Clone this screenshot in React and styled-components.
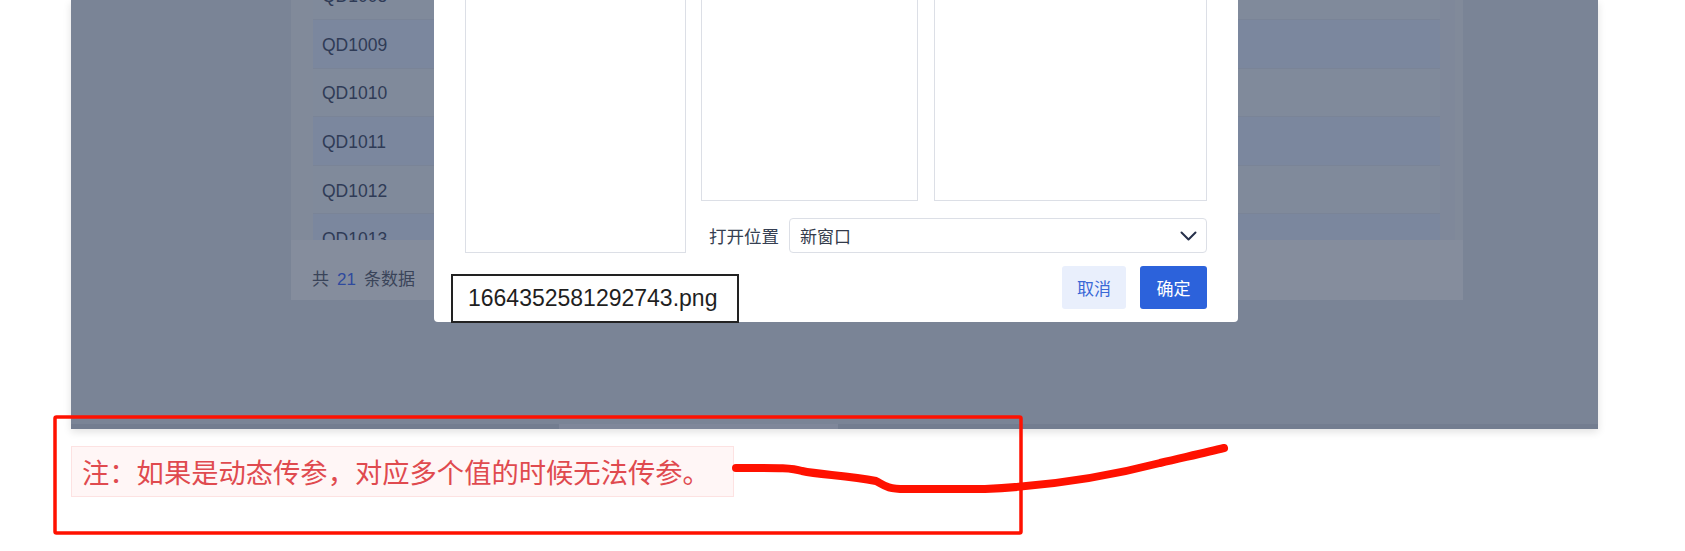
import React from "react";
import styled, { createGlobalStyle } from "styled-components";

const GlobalStyle = createGlobalStyle`
  html, body {
    margin: 0;
    background: #ffffff;
  }
  body {
    font-family: "Liberation Sans", "Noto Sans CJK SC", sans-serif;
  }
`;

const Page = styled.div`
  position: relative;
  width: 1685px;
  height: 551px;
  overflow: hidden;
  background: #ffffff;
`;

const Frame = styled.div`
  position: relative;
  margin-left: 71px;
  width: 1527px;
  height: 429px;
  background: #7a8496;
  box-shadow: 0 3px 8px rgba(0, 0, 0, 0.12);
  display: flex;
  flex-direction: column;
`;

const TableArea = styled.div`
  flex: 1;
  padding-left: 220px;
`;

const TablePanel = styled.div`
  width: 1172px;
  height: 300px;
  background: #818a9a;
  display: flex;
  flex-direction: column;
`;

const RowsArea = styled.div`
  height: 240px;
  display: flex;
  padding-left: 22px;
  padding-right: 8px;
`;

const RowsViewport = styled.div`
  width: 1127px;
  height: 240px;
  overflow: hidden;
`;

const RowsList = styled.div`
  margin-top: -28.5px;
`;

const Row = styled.div`
  height: 48.6px;
  box-sizing: border-box;
  display: flex;
  align-items: center;
  padding: 3px 0 0 9px;
  background: ${(p) => (p.$alt ? "#7b879e" : "#808a9b")};
  border-bottom: 1px solid #7a8497;
  color: #2f3b56;
  font-size: 17.5px;
`;

const ScrollTrack = styled.div`
  width: 15px;
  background: #7f889a;
`;

const PanelFooter = styled.div`
  flex: 1;
  background: #858d9d;
  padding: 28px 0 0 21px;
  line-height: 24px;
  font-size: 17px;
  color: #3a4459;
  display: flex;
  gap: 8px;
`;

const Count = styled.span`
  color: #2f4a9e;
`;

const BottomStrip = styled.div`
  height: 5px;
  display: flex;
`;

const StripPart = styled.div`
  width: ${(p) => p.$w}px;
  background: ${(p) => p.$c};
`;

const Modal = styled.div`
  position: absolute;
  left: 363px;
  top: 0;
  width: 804px;
  height: 322px;
  background: #ffffff;
  border-radius: 0 0 4px 4px;
  overflow: hidden;
  box-sizing: border-box;
  padding: 0 31px;
  display: flex;
  gap: 15px;
`;

const Box = styled.div`
  box-sizing: border-box;
  width: ${(p) => p.$w}px;
  height: ${(p) => p.$h}px;
  margin-top: -10px;
  border: 1px solid #dcdfe6;
  flex-shrink: 0;
`;

const RightSide = styled.div`
  flex: 1;
  display: flex;
  flex-direction: column;
`;

const BoxesRow = styled.div`
  display: flex;
  gap: 16px;
`;

const FieldRow = styled.div`
  margin-top: 17px;
  height: 35px;
  display: flex;
  align-items: center;
  padding-left: 8px;
  gap: 10px;
`;

const Label = styled.span`
  font-size: 17.5px;
  color: #363f52;
  white-space: nowrap;
`;

const Select = styled.div`
  flex: 1;
  height: 35px;
  box-sizing: border-box;
  border: 1px solid #dcdfe6;
  border-radius: 4px;
  display: flex;
  align-items: center;
  justify-content: space-between;
  padding: 0 9px 0 10px;
  font-size: 17px;
  color: #333a4a;
`;

const Footer = styled.div`
  margin-top: 13px;
  display: flex;
  justify-content: flex-end;
  gap: 14px;
`;

const Button = styled.div`
  height: 43px;
  width: ${(p) => p.$w}px;
  border-radius: 3px;
  display: flex;
  align-items: center;
  justify-content: center;
  font-size: 17px;
  background: ${(p) => (p.$primary ? "#2c62db" : "#e9effc")};
  color: ${(p) => (p.$primary ? "#ffffff" : "#3a68d6")};
`;

const FileTip = styled.div`
  position: absolute;
  left: 380px;
  top: 274px;
  width: 288px;
  height: 49px;
  box-sizing: border-box;
  border: 2px solid #222222;
  background: #ffffff;
  display: flex;
  align-items: center;
  padding-left: 15px;
  font-size: 23px;
  color: #1f1f1f;
`;

const Note = styled.div`
  margin: 17px 0 0 71px;
  width: 663px;
  height: 51px;
  box-sizing: border-box;
  background: #fff6f6;
  border: 1px solid #fde2e2;
  display: flex;
  align-items: center;
  padding-left: 10px;
`;

const NoteText = styled.span`
  font-family: "Noto Sans CJK SC", sans-serif;
  font-size: 27.3px;
  line-height: 1;
  color: #e04a4f;
  white-space: nowrap;
`;

const Annotation = styled.svg`
  position: absolute;
  left: 0;
  top: 0;
  pointer-events: none;
`;

const rows = ["QD1008", "QD1009", "QD1010", "QD1011", "QD1012", "QD1013"];

const App = () => {
  return (
    <Page>
      <GlobalStyle />
      <Frame>
        <TableArea>
          <TablePanel>
            <RowsArea>
              <RowsViewport>
                <RowsList>
                  {rows.map((r, i) => (
                    <Row key={r} $alt={i % 2 === 1}>
                      {r}
                    </Row>
                  ))}
                </RowsList>
              </RowsViewport>
              <ScrollTrack />
            </RowsArea>
            <PanelFooter>
              <span>共</span>
              <Count>21</Count>
              <span>条数据</span>
            </PanelFooter>
          </TablePanel>
        </TableArea>
        <BottomStrip>
          <StripPart $w={488} $c="#737d90" />
          <StripPart $w={279} $c="#7f879a" />
          <StripPart $w={760} $c="#737d90" />
        </BottomStrip>

        <Modal>
          <Box $w={221} $h={263} />
          <RightSide>
            <BoxesRow>
              <Box $w={217} $h={211} />
              <Box $w={273} $h={211} />
            </BoxesRow>
            <FieldRow>
              <Label>打开位置</Label>
              <Select>
                <span>新窗口</span>
                <svg width="17" height="10" viewBox="0 0 17 10">
                  <polyline
                    points="1.5,1.5 8.5,8.5 15.5,1.5"
                    fill="none"
                    stroke="#26304a"
                    strokeWidth="2"
                    strokeLinecap="round"
                    strokeLinejoin="round"
                  />
                </svg>
              </Select>
            </FieldRow>
            <Footer>
              <Button $w={64}>取消</Button>
              <Button $w={67} $primary>
                确定
              </Button>
            </Footer>
          </RightSide>
        </Modal>

        <FileTip>1664352581292743.png</FileTip>
      </Frame>

      <Note>
        <NoteText>注：如果是动态传参，对应多个值的时候无法传参。</NoteText>
      </Note>

      <Annotation width="1685" height="551" viewBox="0 0 1685 551">
        <rect
          x="55"
          y="417"
          width="966"
          height="116"
          rx="1.5"
          fill="none"
          stroke="#ff1100"
          strokeWidth="3.5"
        />
        <path
          d="M736 468 C770 468 790 467 802 471 C820 475 848 475 876 481 C884 485 886 489 905 489 L985 489 C1050 486 1110 476 1160 463 C1190 456 1208 452 1224 448"
          fill="none"
          stroke="#ff1100"
          strokeWidth="8"
          strokeLinecap="round"
          strokeLinejoin="round"
        />
      </Annotation>
    </Page>
  );
};

export default App;
